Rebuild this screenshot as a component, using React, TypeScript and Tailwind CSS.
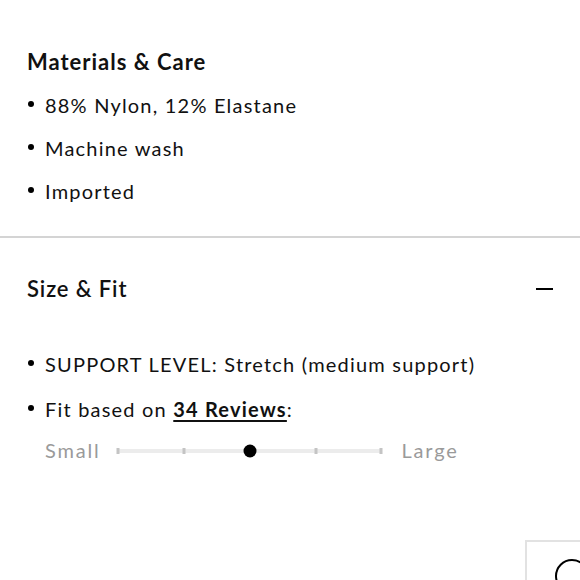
const font = { fontFamily: "Lato, 'Noto Sans', sans-serif" };

const Bullet = ({ children }: { children: React.ReactNode }) => (
  <li className="flex items-start">
    <span className="mt-[10px] ml-[1px] mr-[11px] h-[6px] w-[6px] shrink-0 rounded-full bg-black" />
    <span>{children}</span>
  </li>
);

const ticks = [0, 25, 75, 100];

const FitSlider = () => (
  <div className="flex items-center text-[#9a9a9a] tracking-[0.09em]">
    <span>Small</span>
    <div className="relative ml-[18px] mr-[20px] h-[4px] w-[263px] bg-[#ececec]">
      {ticks.map((t) => (
        <span
          key={t}
          className="absolute top-[-1px] h-[6px] w-[3px] -translate-x-1/2 bg-[#c4c4c4]"
          style={{ left: `${t}%` }}
        />
      ))}
      <span className="absolute left-1/2 top-1/2 h-[13px] w-[13px] -translate-x-1/2 -translate-y-1/2 rounded-full bg-black" />
    </div>
    <span>Large</span>
  </div>
);

export default function App() {
  return (
    <div
      className="relative h-[580px] w-[580px] overflow-hidden bg-white text-[#111]"
      style={font}
    >
      <section className="px-[27px] pt-[48px] pb-[30px]">
        <h3 className="text-[22px] font-bold leading-[28px] tracking-[0.045em]">
          Materials &amp; Care
        </h3>
        <ul className="mt-[15px] flex flex-col gap-[14px] text-[20px] leading-[29px] tracking-[0.06em]">
          <Bullet>88% Nylon, 12% Elastane</Bullet>
          <Bullet>Machine wash</Bullet>
          <Bullet>Imported</Bullet>
        </ul>
      </section>

      <div className="h-[2px] bg-[#d4d4d4]" />

      <section className="px-[27px] pt-[37px]">
        <div className="flex items-center justify-between">
          <h3 className="text-[22px] font-semibold leading-[28px] tracking-[0.04em]">
            Size &amp; Fit
          </h3>
          <span className="h-[2px] w-[17px] bg-black" />
        </div>
        <ul className="mt-[47px] flex flex-col gap-[16px] text-[20px] leading-[29px] tracking-[0.06em]">
          <Bullet>SUPPORT LEVEL: Stretch (medium support)</Bullet>
          <Bullet>
            Fit based on{" "}
            <a className="font-bold underline underline-offset-[3px]" href="#">
              34 Reviews
            </a>
            :
          </Bullet>
        </ul>
        <div className="mt-[12px] pl-[18px] text-[20px] leading-[29px]">
          <FitSlider />
        </div>
      </section>

      <button className="absolute left-[525px] top-[540px] h-[60px] w-[70px] border-2 border-[#e2e2e2] bg-white">
        <span className="absolute left-[28px] top-[17px] h-[34px] w-[34px] rounded-full border-2 border-black" />
      </button>
    </div>
  );
}
